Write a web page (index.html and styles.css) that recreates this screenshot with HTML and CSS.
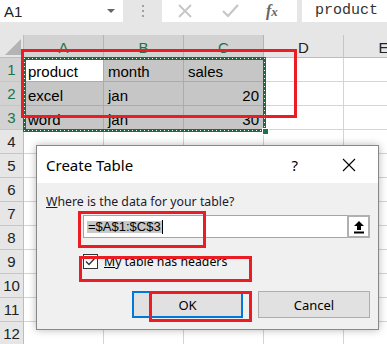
FILE: index.html
```html
<!DOCTYPE html>
<html>
<head>
<meta charset="utf-8">
<link rel="stylesheet" href="styles.css">
</head>
<body>
<div class="app">
  <div class="toolbar">
    <div class="namebox"><span>A1</span><span class="dd"></span></div>
    <div class="grip"><span></span><span></span><span></span></div>
    <div class="fxbox">
      <svg class="ico" width="14" height="14" viewBox="0 0 14 14"><path d="M1 1 L13 13 M13 1 L1 13" stroke="#c6c6c6" stroke-width="1.8" fill="none"/></svg>
      <svg class="ico" width="17" height="14" viewBox="0 0 17 14"><path d="M1 7 L6 12 L16 1" stroke="#c6c6c6" stroke-width="2.2" fill="none"/></svg>
      <span class="fx">f<i>x</i></span>
    </div>
    <div class="formula">product</div>
  </div>

  <div class="sheet">
    <div class="corner"><span class="tri"></span></div>
    <div class="ch sel">A</div>
    <div class="ch sel">B</div>
    <div class="ch sel">C</div>
    <div class="ch">D</div>
    <div class="ch">E</div>

    <div class="rh sel">1</div>
    <div class="c active">product</div>
    <div class="c s">month</div>
    <div class="c s">sales</div>
    <div class="c"></div><div class="c"></div>

    <div class="rh sel">2</div>
    <div class="c s">excel</div>
    <div class="c s">jan</div>
    <div class="c s num">20</div>
    <div class="c"></div><div class="c"></div>

    <div class="rh sel">3</div>
    <div class="c s">word</div>
    <div class="c s">jan</div>
    <div class="c s num">30</div>
    <div class="c"></div><div class="c"></div>

    <div class="rh">4</div><div class="c"></div><div class="c"></div><div class="c"></div><div class="c"></div><div class="c"></div>
    <div class="rh">5</div><div class="c"></div><div class="c"></div><div class="c"></div><div class="c"></div><div class="c"></div>
    <div class="rh">6</div><div class="c"></div><div class="c"></div><div class="c"></div><div class="c"></div><div class="c"></div>
    <div class="rh">7</div><div class="c"></div><div class="c"></div><div class="c"></div><div class="c"></div><div class="c"></div>
    <div class="rh">8</div><div class="c"></div><div class="c"></div><div class="c"></div><div class="c"></div><div class="c"></div>
    <div class="rh">9</div><div class="c"></div><div class="c"></div><div class="c"></div><div class="c"></div><div class="c"></div>
    <div class="rh">10</div><div class="c"></div><div class="c"></div><div class="c"></div><div class="c"></div><div class="c"></div>
    <div class="rh">11</div><div class="c"></div><div class="c"></div><div class="c"></div><div class="c"></div><div class="c"></div>
    <div class="rh">12</div><div class="c"></div><div class="c"></div><div class="c"></div><div class="c"></div><div class="c"></div>

    <div class="ants"><span class="handle"></span></div>
  </div>

  <div class="dialog">
    <div class="dtitle">
      <span class="ttext">Create Table</span>
      <span class="help">?</span>
      <svg class="close" width="14" height="14" viewBox="0 0 14 14"><path d="M1 1 L13 13 M13 1 L1 13" stroke="#000" stroke-width="1.1" fill="none"/></svg>
    </div>
    <div class="dbody">
      <div class="label"><u>W</u>here is the data for your table?</div>
      <div class="inputrow">
        <div class="field"><span class="seltext">=$A$1:$C$3</span><span class="caret"></span></div>
        <div class="pick">
          <svg width="12" height="14" viewBox="0 0 12 14"><path d="M6 1 L1 6 L4 6 L4 10 L8 10 L8 6 L11 6 Z" fill="#000"/><rect x="1" y="11.5" width="10" height="2" fill="#000"/></svg>
        </div>
      </div>
      <div class="checkrow">
        <span class="box"><svg width="13" height="13" viewBox="0 0 13 13"><path d="M2 6.5 L5 9.5 L11 3" stroke="#333" stroke-width="1.4" fill="none"/></svg></span>
        <span class="clabel"><u>M</u>y table has headers</span>
      </div>
      <div class="buttons">
        <div class="btn ok">OK</div>
        <div class="btn">Cancel</div>
      </div>
    </div>
  </div>

  <div class="mark m1"></div>
  <div class="mark m2"></div>
  <div class="mark m3"></div>
  <div class="mark m4"></div>
</div>
</body>
</html>
```

FILE: styles.css
```css
html, body {
  margin: 0;
  padding: 0;
  background: #fff;
}
.app {
  position: relative;
  width: 387px;
  height: 344px;
  overflow: hidden;
  font-family: "Liberation Sans", Arial, sans-serif;
}
.toolbar {
  display: flex;
  align-items: flex-start;
  height: 35px;
  background: #e6e6e6;
}
.namebox {
  width: 123px;
  height: 22px;
  background: #fff;
  box-sizing: border-box;
  padding: 0 8px 0 4px;
  display: flex;
  align-items: center;
  justify-content: space-between;
  font-size: 15px;
  color: #222;
}
.dd {
  width: 0;
  height: 0;
  border-left: 4px solid transparent;
  border-right: 4px solid transparent;
  border-top: 4px solid #666;
}
.grip {
  width: 39px;
  height: 22px;
  display: flex;
  flex-direction: column;
  align-items: center;
  justify-content: center;
  gap: 3px;
}
.grip span {
  width: 2px;
  height: 2px;
  background: #a0a0a0;
}
.fxbox {
  width: 135px;
  height: 22px;
  background: #fff;
  display: flex;
  align-items: center;
  box-sizing: border-box;
  padding-left: 16px;
}
.fxbox .ico:first-child {
  margin-right: 30px;
}
.fxbox .ico:nth-child(2) {
  margin-right: 27px;
}
.fx {
  font-family: "Liberation Serif", serif;
  font-style: italic;
  font-weight: bold;
  font-size: 16px;
  color: #666;
}
.fx i {
  font-size: 13px;
}
.formula {
  margin-left: 5px;
  flex: 1;
  height: 22px;
  background: #fff;
  box-sizing: border-box;
  padding-left: 13px;
  font-family: "Liberation Mono", monospace;
  font-size: 15px;
  line-height: 22px;
  color: #333;
}
.sheet {
  position: relative;
  display: grid;
  grid-template-columns: 24px repeat(5, 80px);
  grid-template-rows: 23px;
  grid-auto-rows: 24px;
  font-size: 15px;
}
.corner {
  background: #e6e6e6;
  border-right: 1px solid #bdbdbd;
  border-bottom: 1px solid #bdbdbd;
  position: relative;
}
.tri {
  position: absolute;
  right: 2px;
  bottom: 2px;
  width: 0;
  height: 0;
  border-left: 16px solid transparent;
  border-bottom: 16px solid #b4b4b4;
}
.ch {
  background: #e6e6e6;
  border-right: 1px solid #c6c6c6;
  border-bottom: 1px solid #bdbdbd;
  display: flex;
  align-items: center;
  justify-content: center;
  color: #222;
  font-size: 15px;
  padding-top: 2px;
  box-sizing: border-box;
}
.ch.sel {
  background: #d2d2d2;
  color: #217346;
  border-right-color: #b4b4b4;
}
.rh {
  background: #e6e6e6;
  border-right: 1px solid #bdbdbd;
  border-bottom: 1px solid #c6c6c6;
  display: flex;
  align-items: center;
  justify-content: center;
  color: #222;
  font-size: 15px;
}
.rh.sel {
  background: #d2d2d2;
  color: #217346;
}
.c {
  border-right: 1px solid #d4d4d4;
  border-bottom: 1px solid #d4d4d4;
  display: flex;
  align-items: center;
  padding: 3px 4px 0 4px;
  box-sizing: border-box;
  color: #000;
  font-size: 15px;
}
.c.s {
  background: #c6c6c6;
  border-color: #ababab;
}
.c.active {
  background: #fff;
  border-right-color: #ababab;
  border-bottom-color: #ababab;
}
.c.num {
  justify-content: flex-end;
}
.ants {
  position: absolute;
  left: 23px;
  top: 22px;
  width: 243px;
  height: 75px;
  box-sizing: border-box;
  border: 3px solid #1e6b40;
  pointer-events: none;
}
.ants::after {
  content: "";
  position: absolute;
  inset: -2px;
  background:
    repeating-linear-gradient(90deg, #fff 0 1px, transparent 1px 4px) top left / 100% 1px no-repeat,
    repeating-linear-gradient(90deg, #fff 0 1px, transparent 1px 4px) bottom left / 100% 1px no-repeat,
    repeating-linear-gradient(180deg, #fff 0 1px, transparent 1px 4px) top left / 1px 100% no-repeat,
    repeating-linear-gradient(180deg, #fff 0 1px, transparent 1px 4px) top right / 1px 100% no-repeat;
}
.handle {
  position: absolute;
  right: -6px;
  bottom: -6px;
  width: 5px;
  height: 5px;
  background: #217346;
  border: 1px solid #fff;
  z-index: 1;
}
.dialog {
  position: absolute;
  left: 36px;
  top: 145px;
  width: 343px;
  height: 185px;
  box-sizing: border-box;
  border: 1px solid #888;
  background: #f0f0f0;
  box-shadow: 0 0 8px rgba(0,0,0,0.28);
  font-family: "Noto Sans", "Open Sans", sans-serif;
  color: #000;
  display: flex;
  flex-direction: column;
}
.dtitle {
  height: 37px;
  background: #fff;
  display: flex;
  align-items: center;
  padding-left: 9px;
  font-size: 15px;
}
.ttext {
  flex: 1;
}
.help {
  font-size: 15px;
  margin-right: 44px;
}
.close {
  margin-right: 22px;
}
.dbody {
  padding: 11px 8px 0 9px;
  font-size: 12.3px;
}
.label {
  height: 16px;
  line-height: 16px;
  color: #1a1a2e;
}
.inputrow {
  margin: 5px 0 0 37px;
  height: 23px;
  display: flex;
  border: 1px solid #a5a5a5;
  background: #fff;
  box-sizing: border-box;
}
.field {
  flex: 1;
  display: flex;
  align-items: center;
  padding-left: 3px;
}
.seltext {
  background: #c8c8c8;
  line-height: 12px;
  padding: 0 1px;
  font-family: "Liberation Sans", Arial, sans-serif;
  font-size: 13px;
}
.caret {
  width: 1px;
  height: 14px;
  background: #000;
}
.pick {
  width: 23px;
  box-sizing: border-box;
  border: 2px solid #b0b0b0;
  margin: -1px -1px -1px 0;
  display: flex;
  align-items: center;
  justify-content: center;
  background: #fff;
}
.checkrow {
  margin: 16px 0 0 37px;
  display: flex;
  align-items: center;
  height: 15px;
}
.box {
  width: 15px;
  height: 15px;
  box-sizing: border-box;
  border: 1px solid #333;
  background: #fff;
  display: flex;
  align-items: center;
  justify-content: center;
  margin-right: 6px;
}
.clabel {
  line-height: 15px;
}
.buttons {
  margin-top: 22px;
  display: flex;
  justify-content: flex-end;
  gap: 15px;
}
.btn {
  width: 112px;
  height: 27px;
  box-sizing: border-box;
  border: 1px solid #adadad;
  background: #e1e1e1;
  display: flex;
  align-items: center;
  justify-content: center;
  font-size: 13px;
}
.btn.ok {
  width: 111px;
  border: 2px solid #0078d7;
}
.mark {
  position: absolute;
  border: 3px solid #ec1c24;
  box-sizing: border-box;
}
.m1 { left: 21px; top: 49px; width: 276px; height: 69px; }
.m2 { left: 78px; top: 211px; width: 128px; height: 37px; }
.m3 { left: 79px; top: 256px; width: 173px; height: 26px; }
.m4 { left: 149px; top: 291px; width: 103px; height: 31px; }
```
